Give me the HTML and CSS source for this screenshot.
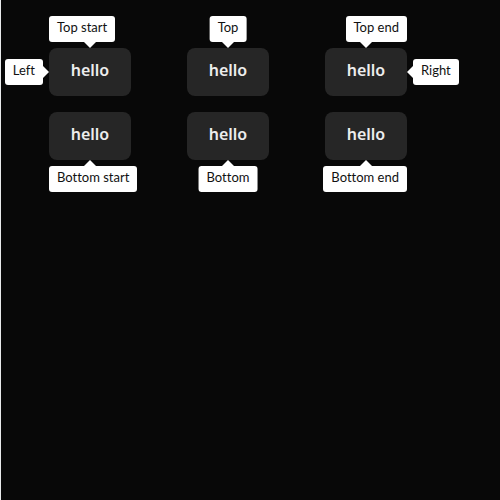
FILE: index.html
```html
<!DOCTYPE html>
<html lang="en">
<head>
<meta charset="utf-8">
<title>Tooltips</title>
<link rel="stylesheet" href="styles.css">
</head>
<body>
<main class="demo">
  <div class="anchor">
    <button class="button" type="button" aria-describedby="tip-top-start tip-left">hello</button>
    <span class="tip tip-top tip-start" id="tip-top-start" role="tooltip">Top start</span>
    <span class="arrow arrow-top"></span>
    <span class="tip tip-left" id="tip-left" role="tooltip">Left</span>
    <span class="arrow arrow-left"></span>
  </div>
  <div class="anchor">
    <button class="button" type="button" aria-describedby="tip-top">hello</button>
    <span class="tip tip-top tip-center" id="tip-top" role="tooltip">Top</span>
    <span class="arrow arrow-top"></span>
  </div>
  <div class="anchor">
    <button class="button" type="button" aria-describedby="tip-top-end tip-right">hello</button>
    <span class="tip tip-top tip-end" id="tip-top-end" role="tooltip">Top end</span>
    <span class="arrow arrow-top"></span>
    <span class="tip tip-right" id="tip-right" role="tooltip">Right</span>
    <span class="arrow arrow-right"></span>
  </div>
  <div class="anchor">
    <button class="button" type="button" aria-describedby="tip-bottom-start">hello</button>
    <span class="tip tip-bottom tip-start" id="tip-bottom-start" role="tooltip">Bottom start</span>
    <span class="arrow arrow-bottom"></span>
  </div>
  <div class="anchor">
    <button class="button" type="button" aria-describedby="tip-bottom">hello</button>
    <span class="tip tip-bottom tip-center" id="tip-bottom" role="tooltip">Bottom</span>
    <span class="arrow arrow-bottom"></span>
  </div>
  <div class="anchor">
    <button class="button" type="button" aria-describedby="tip-bottom-end">hello</button>
    <span class="tip tip-bottom tip-end" id="tip-bottom-end" role="tooltip">Bottom end</span>
    <span class="arrow arrow-bottom"></span>
  </div>
</main>
</body>
</html>
```
FILE: styles.css
```css
* {
  box-sizing: border-box;
}

body {
  margin: 0;
  min-height: 100vh;
  border-left: 1px solid #e8eaeb;
  background: #080808;
  font-family: Lato, "Noto Sans", sans-serif;
  font-variant-ligatures: none;
}

.demo {
  display: grid;
  grid-template-columns: repeat(3, max-content);
  gap: 16px 56px;
  padding: 48px;
}

.anchor {
  position: relative;
  display: flex;
}

.button {
  min-width: 82px;
  padding: 10px 20px 14px;
  border: 0;
  border-radius: 8px;
  background: #262626;
  color: #ededed;
  font: 600 16px/24px "Noto Sans", sans-serif;
}

.tip {
  position: absolute;
  padding: 2px 8px 6px;
  border-radius: 3px;
  background: #fff;
  color: #111;
  font-size: 13px;
  line-height: 18px;
  white-space: nowrap;
}

.tip-top {
  bottom: calc(100% + 6px);
}

.tip-bottom {
  top: calc(100% + 6px);
}

.tip-start {
  left: 0;
}

.tip-center {
  left: 50%;
  transform: translateX(-50%);
}

.tip-end {
  right: 0;
}

.tip-left,
.tip-right {
  top: 50%;
  transform: translateY(-50%);
}

.tip-left {
  right: calc(100% + 6px);
}

.tip-right {
  left: calc(100% + 6px);
}

.arrow {
  position: absolute;
  border: 6px solid transparent;
}

.arrow-top,
.arrow-bottom {
  left: calc(50% - 6px);
}

.arrow-left,
.arrow-right {
  top: calc(50% - 6px);
}

.arrow-top {
  bottom: calc(100% - 6px);
  border-top-color: #fff;
}

.arrow-bottom {
  top: calc(100% - 6px);
  border-bottom-color: #fff;
}

.arrow-left {
  right: calc(100% - 6px);
  border-left-color: #fff;
}

.arrow-right {
  left: calc(100% - 6px);
  border-right-color: #fff;
}
```
